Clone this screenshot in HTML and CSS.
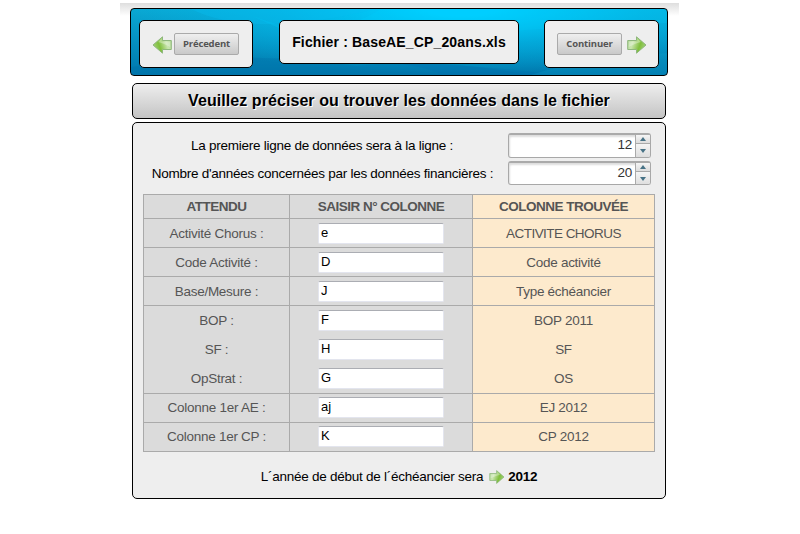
FILE: index.html
```
<!DOCTYPE html>
<html lang="fr">
<head>
<meta charset="utf-8">
<title>BaseAE_CP_20ans.xls</title>
<link rel="stylesheet" href="styles.css">
</head>
<body>
<svg class="defs" width="0" height="0">
  <defs>
    <linearGradient id="green" x1="0" y1="0" x2="1" y2="0.3">
      <stop offset="0" stop-color="#a9d58a"/><stop offset="0.35" stop-color="#c9e5af"/><stop offset="0.75" stop-color="#80bf3c"/><stop offset="1" stop-color="#9bcd6c"/>
    </linearGradient>
    <linearGradient id="green-left" x1="0" y1="0" x2="1" y2="0.3">
      <stop offset="0" stop-color="#a9d58a"/><stop offset="0.35" stop-color="#c9e5af"/><stop offset="0.75" stop-color="#80bf3c"/><stop offset="1" stop-color="#9bcd6c"/>
    </linearGradient>
    <symbol id="arrow" viewBox="0 0 20 18">
      <path d="M.7 4.5H9.5V.8L19 9L9.5 17.2V13.5H.7Z" fill="url(#green)" stroke="#8fb77e"/>
      <path d="M1.8 5.6H10.5V3L14 6Q9 7 1.8 11Z" fill="#fff" opacity=".3"/>
    </symbol>
  </defs>
</svg>
<main class="page">
  <header class="banner">
    <svg class="waves" viewBox="0 0 536 66" preserveAspectRatio="none">
      <path d="M60 0Q120 30 245 0Z" fill="#08bdf2" opacity=".35"/>
      <path d="M115 4Q190 38 250 0H536V14Q330 20 205 45Z" fill="#00d2ff" opacity=".2"/>
      <path d="M0 58Q110 40 225 57Q300 48 400 66H0Z" fill="#006ba5" opacity=".28"/>
      <path d="M265 54Q370 57 420 66H310Q300 59 265 54Z" fill="#006fae" opacity=".35"/>
      <path d="M400 66Q450 49 536 44V66Z" fill="#12a9d3" opacity=".2"/>
    </svg>
    <div class="box prev">
      <svg class="arrow left"><use href="#arrow"/></svg><button class="btn">Précedent</button>
    </div>
    <div class="box file"><span>Fichier : BaseAE_CP_20ans.xls</span></div>
    <div class="box next">
      <button class="btn">Continuer</button><svg class="arrow"><use href="#arrow"/></svg>
    </div>
  </header>
  <h1 class="title"><span>Veuillez préciser ou trouver les données dans le fichier</span></h1>
  <section class="panel">
    <div class="field"><label class="first">La premiere ligne de données sera à la ligne :</label>
      <div class="spinner"><span class="value">12</span><span class="steps"><i class="up"></i><i class="down"></i></span></div></div>
    <div class="field"><label>Nombre d'années concernées par les données financières :</label>
      <div class="spinner short"><span class="value">20</span><span class="steps"><i class="up"></i><i class="down"></i></span></div></div>
    <div class="table">
      <div class="row head"><b>ATTENDU</b><b>SAISIR N° COLONNE</b><b>COLONNE TROUVÉE</b></div>
      <div class="row"><div>Activité Chorus :</div><div><input value="e"></div><div class="caps">ACTIVITE CHORUS</div></div>
      <div class="row"><div>Code Activité :</div><div><input value="D"></div><div>Code activité</div></div>
      <div class="row"><div>Base/Mesure :</div><div><input value="J"></div><div>Type échéancier</div></div>
      <div class="row open"><div>BOP :</div><div><input value="F"></div><div>BOP 2011</div></div>
      <div class="row open"><div>SF :</div><div><input value="H"></div><div>SF</div></div>
      <div class="row tall"><div>OpStrat :</div><div><input value="G"></div><div>OS</div></div>
      <div class="row late"><div>Colonne 1er AE :</div><div><input value="aj"></div><div>EJ 2012</div></div>
      <div class="row late"><div>Colonne 1er CP :</div><div><input value="K"></div><div>CP 2012</div></div>
    </div>
    <p class="result"><span>L´année de début de l´échéancier sera</span><svg class="arrow small"><use href="#arrow"/></svg><b>2012</b></p>
  </section>
</main>
</body>
</html>
```
FILE: styles.css
```
* { box-sizing: border-box; }
body { margin: 0; background: #fff; font: 13.5px/16px "Liberation Sans", Arial, sans-serif; letter-spacing: -.26px; color: #000; }
.defs { position: absolute; }
.page { width: 559px; height: 531px; margin: 3px 0 0 120px; padding: 5px 0 0 10px; background: linear-gradient(#dedede, #fff 13px); }
.banner { position: relative; width: 538px; height: 68px; border: 1px solid #000; border-radius: 4px; overflow: hidden; display: flex; align-items: flex-start; padding: 11px 8px 0;
  background: radial-gradient(ellipse 330px 65px at 330px 0, #00ceff 10%, rgba(0, 190, 240, .55) 55%, transparent), linear-gradient(#0aa8d3, #0078ad); }
.waves { position: absolute; inset: 0; width: 100%; height: 100%; }
.box { position: relative; height: 48px; border: 1px solid #000; border-radius: 5px; background: #eee; display: flex; align-items: center; }
.prev { width: 114px; padding-left: 12px; }
.file { width: 240px; height: 44px; margin: 0 25px 0 26px; justify-content: center; font-weight: bold; font-size: 14px; letter-spacing: .15px; }
.next { width: 115px; padding-left: 12px; }
.btn { width: 65px; height: 22px; padding: 0 0 1px; border: 1px solid #aaa; border-radius: 2px; background: linear-gradient(#efefef, #c9c9c9); font: bold 9.5px/18px "Open Sans", sans-serif; letter-spacing: -.15px; color: #555; }
.arrow { width: 20px; height: 18px; flex: none; }
.left { transform: scaleX(-1); }
.prev .left { margin: 2px 2px 0 0; }
.next .arrow { margin: 1px 0 0 5px; }
.title { width: 534px; height: 36px; margin: 7px 0 3px 2px; border: 1px solid #000; border-radius: 5px; background: linear-gradient(#eee, #c4c4c4); font-size: 16px; line-height: 33px; letter-spacing: .07px; text-align: center; text-shadow: 1px 1px 0 #fff; }
.panel { width: 534px; height: 377px; margin-left: 2px; padding: 10px 10px 0; border: 1px solid #000; border-radius: 5px; background: #eee; }
.field { display: flex; height: 28px; }
.field label { width: 365px; padding: 5px 6px 0 0; text-align: center; white-space: nowrap; }
.field .first { padding-right: 7px; }
.spinner { display: flex; width: 143px; height: 25px; border: 1px solid #a8a8a8; border-top: 2px solid #aaa; border-radius: 3px; background: #fff; box-shadow: inset 1px 2px 2px #ddd; overflow: hidden; }
.short { height: 24px; }
.value { flex: 1; text-align: right; padding: 2px 3px 0 0; color: #333; }
.steps { width: 15px; border-left: 1px solid #aaa; display: grid; grid-template-rows: 8px 14px; background: #eee; }
.steps i { display: flex; align-items: center; justify-content: center; background: linear-gradient(#f5f5f5, #ddd); }
.steps .down { border-top: 1px solid #aaa; }
.steps i::before { content: ""; border: 3px solid transparent; }
.steps .up::before { border-top: 0; border-bottom: 4px solid #477286; }
.steps .down::before { border-bottom: 0; border-top: 4px solid #477286; }
.table { width: 512px; margin-top: 5px; border: 1px solid #aaa; border-width: 1px 0 0 1px; color: #555; }
.row { display: grid; grid-template-columns: 146px 183px 182px; height: 29px; }
.row > * { border-right: 1px solid #aaa; border-bottom: 1px solid #aaa; background: #dbdbdb; text-align: center; padding-top: 7px; white-space: nowrap; }
.row > :last-child { background: #fdeacd; }
.head { height: 24px; letter-spacing: -.5px; }
.caps { letter-spacing: -.55px; }
.head > * { padding-top: 4px; }
.open > * { border-bottom: 0; }
.tall { height: 30px; }
.late > * { padding-top: 6px; }
.row > :nth-child(2):not(b) { padding: 4px 0 0; }
.late > :nth-child(2):not(b) { padding-top: 3px; }
.row input { display: block; width: 126px; height: 21px; margin-left: 28px; padding: 0 0 2px 2px; border: 1px solid #e3e5ee; border-top-color: #abadb3; border-radius: 2px; background: #fff; color: #000; font: 13px "Liberation Sans", Arial, sans-serif; outline: 0; }
.result { display: flex; justify-content: center; align-items: center; height: 18px; margin: 16px 0 0; }
.small { width: 16px; height: 14px; margin: 0 3px 0 6px; }
```
